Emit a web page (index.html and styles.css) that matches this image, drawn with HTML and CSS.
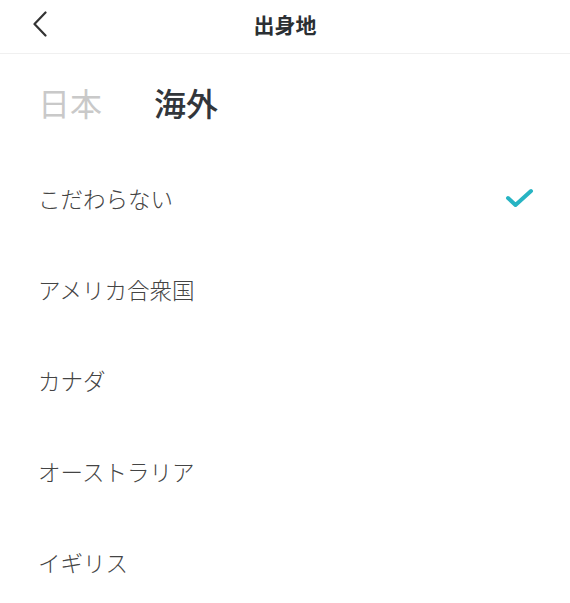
FILE: index.html
```html
<!DOCTYPE html>
<html>

<head>
    <meta charset='utf-8'>
    <title>出身地</title>
    <meta name='viewport' content='width=device-width, initial-scale=1'>
    <link rel="stylesheet" href="styles.css">
</head>

<body>
    <div class="header">
        <div class="back">
            <svg width="16" height="26" viewBox="0 0 16 26">
                <path d="M13.5 1.5 L2.5 13 L13.5 24.5" fill="none" stroke="#333" stroke-width="2.2" stroke-linecap="round" stroke-linejoin="round" />
            </svg>
        </div>
        <div class="title">出身地</div>
        <div></div>
    </div>

    <div class="tabs">
        <div class="tab">日本</div>
        <div class="tab active">海外</div>
    </div>

    <ul class="list">
        <li class="item">
            <span>こだわらない</span>
            <svg class="check" width="30" height="22" viewBox="0 0 30 22">
                <path d="M4 11 L11.5 18 L27 4" fill="none" stroke="#27b4c3" stroke-width="4" stroke-linecap="round" stroke-linejoin="round" />
            </svg>
        </li>
        <li class="item"><span>アメリカ合衆国</span></li>
        <li class="item"><span>カナダ</span></li>
        <li class="item"><span>オーストラリア</span></li>
        <li class="item"><span>イギリス</span></li>
    </ul>
</body>

</html>
```

FILE: styles.css
```css
body {
    margin: 0;
    background: #fff;
    font-family: "Noto Sans CJK JP", "Noto Sans", sans-serif;
}

.header {
    display: grid;
    grid-template-columns: 1fr auto 1fr;
    align-items: center;
    height: 54px;
    box-sizing: border-box;
    padding: 0 0 6px 0;
    border-bottom: 1px solid #f0f0f0;
}

.back {
    padding-left: 32px;
    display: flex;
    align-items: center;
}

.back svg {
    display: block;
}

.title {
    font-size: 21px;
    font-weight: 700;
    color: #2b2f33;
}

.tabs {
    display: flex;
    gap: 52px;
    padding: 28px 0 0 38px;
}

.tab {
    font-size: 32px;
    line-height: 40px;
    color: #c9c9c9;
}

.tab.active {
    font-weight: 500;
    color: #32363b;
}

.list {
    list-style: none;
    margin: 0;
    padding: 30px 0 0 0;
}

.item {
    display: flex;
    align-items: center;
    justify-content: space-between;
    height: 91px;
    padding: 0 36px 0 38px;
    font-size: 22.5px;
    font-weight: 300;
    color: #444;
}

.check {
    display: block;
}
```
